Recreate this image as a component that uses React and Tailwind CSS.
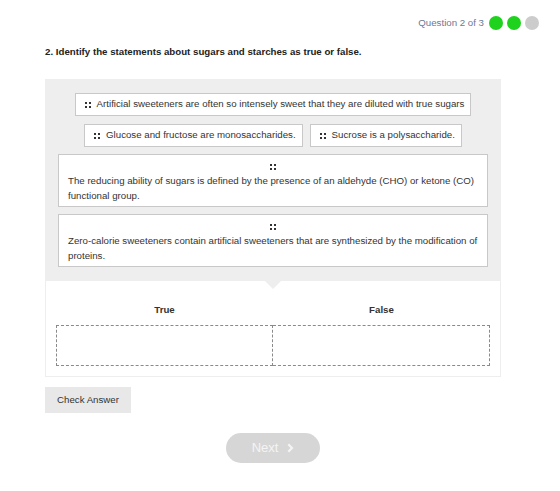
import React from "react";

function Grip() {
  return (
    <svg width="6" height="6" viewBox="0 0 6 6" className="inline-block shrink-0">
      <rect x="0" y="0" width="2" height="2" fill="#333" />
      <rect x="4" y="0" width="2" height="2" fill="#333" />
      <rect x="0" y="4" width="2" height="2" fill="#333" />
      <rect x="4" y="4" width="2" height="2" fill="#333" />
    </svg>
  );
}

function InlineItem({ text }) {
  return (
    <div className="flex items-center gap-[6px] border border-[#c8c8c8] bg-white pl-[9px] pr-[6px] h-[23px] text-[9.7px] text-[#333] whitespace-nowrap">
      <Grip />
      <span>{text}</span>
    </div>
  );
}

function BlockItem({ text }) {
  return (
    <div className="w-full border border-[#c8c8c8] bg-white px-[9px] pt-[9px] pb-[3px] text-[9.7px] leading-[15px] text-[#333]">
      <div className="flex justify-center mb-[3px]">
        <Grip />
      </div>
      <div>{text}</div>
    </div>
  );
}

export default function App() {
  return (
    <div
      className="w-[560px] h-[491px] bg-white relative"
      style={{ fontFamily: '"Liberation Sans", Arial, sans-serif' }}
    >
      <div className="flex justify-end items-center pt-[16px] pr-[21px] gap-[4px] h-[30px]">
        <span className="text-[9.7px] text-[#6b7896] mr-[1px]">Question 2 of 3</span>
        <span className="w-[14px] h-[14px] rounded-full bg-[#1ed21e]" />
        <span className="w-[14px] h-[14px] rounded-full bg-[#1ed21e]" />
        <span className="w-[14px] h-[14px] rounded-full bg-[#cccccc]" />
      </div>

      <div className="px-[45px]">
        <div className="mt-[14px] text-[9.7px] leading-[15px] font-bold text-[#222]">
          2. Identify the statements about sugars and starches as true or false.
        </div>

        <div className="mt-[20px] w-[456px]">
          <div className="relative bg-[#eeeeee] px-[13px] pt-[14px] pb-[14px] flex flex-col items-center gap-[7px]">
            <InlineItem text="Artificial sweeteners are often so intensely sweet that they are diluted with true sugars" />
            <div className="flex gap-[7px] mt-[1px]">
              <InlineItem text="Glucose and fructose are monosaccharides." />
              <InlineItem text="Sucrose is a polysaccharide." />
            </div>
            <BlockItem text="The reducing ability of sugars is defined by the presence of an aldehyde (CHO) or ketone (CO) functional group." />
            <BlockItem text="Zero-calorie sweeteners contain artificial sweeteners that are synthesized by the modification of proteins." />
            <div className="absolute left-1/2 -translate-x-1/2 top-full w-0 h-0 border-l-[8px] border-r-[8px] border-t-[8px] border-l-transparent border-r-transparent border-t-[#eeeeee]" />
          </div>
          <div className="border border-t-0 border-[#eeeeee] bg-white px-[10px] pt-[21px] pb-[10px]">
            <div className="grid grid-cols-2 leading-[15px]">
              <div className="text-center text-[9.7px] font-bold text-[#333]">True</div>
              <div className="text-center text-[9.7px] font-bold text-[#333]">False</div>
            </div>
            <div className="grid grid-cols-2 mt-[8px]">
              <div className="h-[41px] border border-dashed border-[#8a8a8a]" />
              <div className="h-[41px] border border-dashed border-[#8a8a8a] border-l-0" />
            </div>
          </div>
        </div>

        <button className="mt-[10px] h-[26px] w-[86px] bg-[#e8e8e8] text-[9.7px] text-[#333]">
          Check Answer
        </button>

        <div className="flex justify-center mt-[20px] w-[456px]">
          <div className="flex items-center justify-center gap-[9px] w-[94px] h-[30px] rounded-full bg-[#d6d6d6] text-[13px] text-[#f4f4f4]">
            <span>Next</span>
            <svg width="7" height="10" viewBox="0 0 7 10">
              <path d="M1.3 1.2 L5 5 L1.3 8.8" stroke="#f4f4f4" strokeWidth="2.2" fill="none" />
            </svg>
          </div>
        </div>
      </div>
    </div>
  );
}
